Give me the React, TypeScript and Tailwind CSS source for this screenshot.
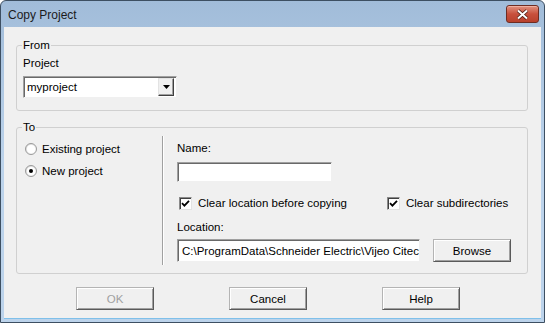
import React from 'react';

const Check = () => (
  <span className="flex h-[13px] w-[13px] items-center justify-center border border-[#8a8a8a] border-b-[#e3e3e3] border-r-[#e3e3e3] bg-white shadow-[inset_1px_1px_0_#404040]">
    <svg width="9" height="9" viewBox="0 0 9 9">
      <path d="M1 4.2 L3.4 6.6 L8 1.8" fill="none" stroke="#000" strokeWidth="1.8" />
    </svg>
  </span>
);

const Radio = ({ on }: { on?: boolean }) => (
  <span className="flex h-[12px] w-[12px] items-center justify-center rounded-full border border-[#9a9a9a] bg-gradient-to-br from-[#d8d8d8] to-white">
    <span className="flex h-[8px] w-[8px] items-center justify-center rounded-full bg-white">
      {on && <span className="h-[4px] w-[4px] rounded-full bg-black" />}
    </span>
  </span>
);

const Btn = ({ label, disabled }: { label: string; disabled?: boolean }) => (
  <button
    className={`flex h-[23px] w-[78px] items-center justify-center border border-[#b4b4b4] border-b-[#5a5a5a] border-r-[#5a5a5a] bg-[#f0f0f0] shadow-[inset_1px_1px_0_#fff,inset_-1px_-1px_0_#a0a0a0] ${
      disabled ? 'text-[#a0a0a0]' : 'text-black'
    }`}
  >
    {label}
  </button>
);

const sunken =
  'border border-[#a0a0a0] border-b-[#f0f0f0] border-r-[#f0f0f0] bg-white shadow-[inset_1px_1px_0_#696969]';

export default function App() {
  return (
    <div className="h-[323px] w-[545px] bg-white font-['Liberation_Sans',Arial,sans-serif] text-[11.5px] leading-[14px] text-black">
      <div className="flex h-full w-full flex-col rounded-t-[6px] border border-[#3d4f62] bg-gradient-to-b from-[#a1bcd9] via-[#bcd3eb] to-[#bcd3eb]">
        {/* title bar */}
        <div className="flex h-[26px] shrink-0 items-start justify-between pl-[7px] pr-[5px]">
          <span className="mt-[7px] text-[12px] text-[#1b1b1b]">Copy Project</span>
          <div className="mt-[4px] flex h-[18px] w-[33px] items-center justify-center rounded-[3px] border border-[#6e2c22] bg-gradient-to-b from-[#e0917f] via-[#c8503c] to-[#b8412c] shadow-[inset_0_1px_0_#f0b0a0]">
            <svg width="13" height="11" viewBox="0 0 13 11">
              <path d="M2 1.5 L11 9.5 M11 1.5 L2 9.5" stroke="#4a1a12" strokeWidth="3.6" />
              <path d="M2 1.5 L11 9.5 M11 1.5 L2 9.5" stroke="#fff" strokeWidth="2" />
            </svg>
          </div>
        </div>

        {/* client area */}
        <div className="mx-[3px] mb-[3px] flex-1 border-b border-[#7fc0ea] bg-[#f0f0f0] pl-[12px] pr-[13px] pt-[11px]">
          <fieldset className="rounded-[3px] border border-[#d0d0d0]">
            <legend className="ml-[5px] px-[1px] leading-[14px]">From</legend>
            <div className="pb-[12px] pl-[6px] pt-[4px]">
              <div>Project</div>
              <div className={`mt-[6px] flex h-[22px] w-[154px] items-center justify-between pl-[3px] pr-[2px] ${sunken}`}>
                <span>myproject</span>
                <span className="flex h-[18px] w-[16px] items-center justify-center border border-[#e3e3e3] border-b-[#404040] border-r-[#404040] bg-[#f0f0f0] shadow-[inset_-1px_-1px_0_#a0a0a0]">
                  <svg width="7" height="4" viewBox="0 0 7 4">
                    <path d="M0 0 H7 L3.5 4 Z" fill="#000" />
                  </svg>
                </span>
              </div>
            </div>
          </fieldset>

          <fieldset className="mt-[9px] rounded-[3px] border border-[#d0d0d0]">
            <legend className="ml-[5px] px-[1px] leading-[14px]">To</legend>
            <div className="flex pb-[8px] pt-[2px]">
              <div className="flex w-[145px] flex-col gap-[8px] pl-[8px] pt-[6px]">
                <label className="flex h-[14px] items-center gap-[5px]">
                  <Radio />
                  <span>Existing project</span>
                </label>
                <label className="flex h-[14px] items-center gap-[5px]">
                  <Radio on />
                  <span>New project</span>
                </label>
              </div>
              <div className="w-[2px] border-l border-r border-l-[#a0a0a0] border-r-white" />
              <div className="flex-1 pb-[3px] pl-[13px]">
                <div className="mt-[5px]">Name:</div>
                <div className={`mt-[7px] h-[20px] w-[155px] ${sunken}`} />
                <div className="mt-[14px] flex h-[14px] items-center">
                  <label className="flex w-[210px] items-center gap-[6px] pl-[2px]">
                    <Check />
                    <span>Clear location before copying</span>
                  </label>
                  <label className="flex items-center gap-[6px]">
                    <Check />
                    <span>Clear subdirectories</span>
                  </label>
                </div>
                <div className="mt-[10px]">Location:</div>
                <div className="mt-[5px] flex h-[23px] items-center gap-[13px]">
                  <div className={`flex h-[23px] w-[243px] items-center overflow-hidden whitespace-nowrap pl-[4px] ${sunken}`}>
                    C:\ProgramData\Schneider Electric\Vijeo Citec
                  </div>
                  <Btn label="Browse" />
                </div>
              </div>
            </div>
          </fieldset>

          <div className="mt-[13px] flex gap-[75px] pl-[60px]">
            <Btn label="OK" disabled />
            <Btn label="Cancel" />
            <Btn label="Help" />
          </div>
        </div>
      </div>
    </div>
  );
}
